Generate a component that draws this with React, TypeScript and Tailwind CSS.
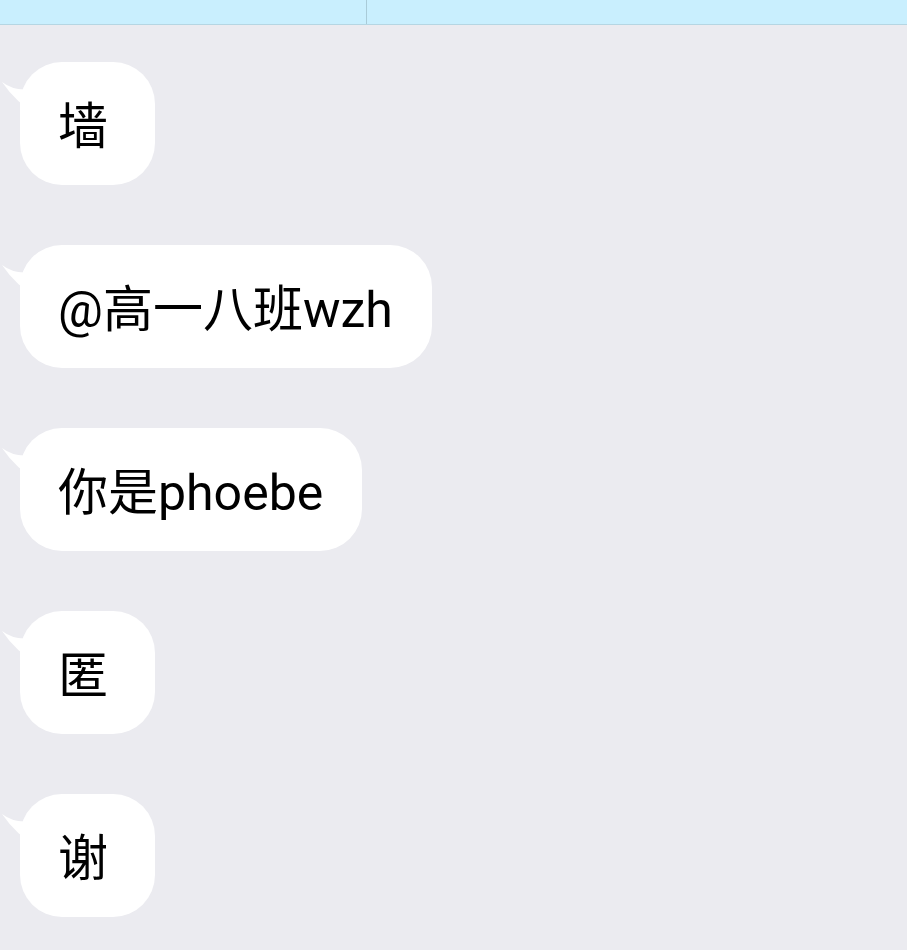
import React from "react";

const messages = ["墙", "@高一八班wzh", "你是phoebe", "匿", "谢"];

function Bubble({ text }: { text: string }) {
  return (
    <div className="relative self-start">
      <svg
        className="absolute left-[-19px] top-[14px]"
        width="44"
        height="44"
        viewBox="0 0 44 44"
      >
        <path d="M1 6 Q 16 17 34 12 L 36 38 Q 16 28 1 6 Z" fill="#ffffff" />
      </svg>
      <div className="relative flex h-[123px] min-w-[135px] items-center rounded-[42px] bg-white pl-[38px] pr-[39px] pt-[6px]">
        <span
          className="whitespace-nowrap text-[50px] leading-none text-black"
          style={{ fontFamily: 'Roboto, "Noto Sans CJK SC", sans-serif' }}
        >
          {text}
        </span>
      </div>
    </div>
  );
}

export default function App() {
  return (
    <div className="flex h-[950px] w-[907px] flex-col overflow-hidden bg-[#ebebf0]">
      <div className="flex h-[25px] shrink-0 border-b border-[#b5d6e3] bg-[#c9effe]">
        <div className="w-[367px] border-r border-[#a9cbd8]" />
        <div className="flex-1" />
      </div>
      <div className="flex flex-col gap-[60px] pl-[20px] pt-[37px]">
        {messages.map((m, i) => (
          <Bubble key={i} text={m} />
        ))}
      </div>
    </div>
  );
}
